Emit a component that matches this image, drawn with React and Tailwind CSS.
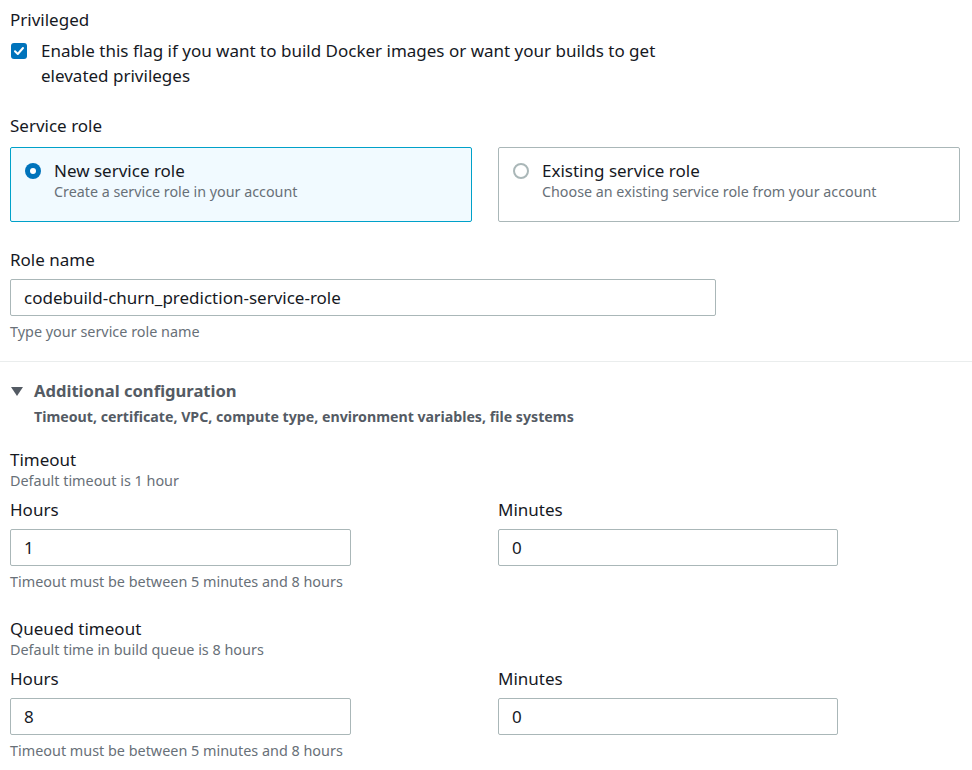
import React from "react";

const FONT = { fontFamily: '"Noto Sans", "Open Sans", sans-serif' };

function Label({ children, className = "" }) {
  return <div className={`text-[17px] leading-[24px] text-[#16191f] ${className}`}>{children}</div>;
}

function Desc({ children, className = "" }) {
  return <div className={`text-[14.4px] leading-[20px] text-[#687078] ${className}`}>{children}</div>;
}

function TextBox({ value, className = "" }) {
  return (
    <div
      className={`h-[37px] border border-[#aab7b8] rounded-[2px] bg-white pl-[13px] flex items-center text-[17px] text-[#16191f] ${className}`}
    >
      {value}
    </div>
  );
}

function Radio({ checked }) {
  return checked ? (
    <div className="w-[16px] h-[16px] rounded-full bg-[#0073bb] flex items-center justify-center shrink-0">
      <div className="w-[6px] h-[6px] rounded-full bg-white" />
    </div>
  ) : (
    <div className="w-[16px] h-[16px] rounded-full border-2 border-[#aab7b8] bg-white shrink-0" />
  );
}

function RoleCard({ checked, title, desc }) {
  return (
    <div
      className={`h-[75px] border rounded-[2px] pl-[14px] pt-[11px] flex gap-[13px] ${
        checked ? "bg-[#f1faff] border-[#00a1c9]" : "bg-white border-[#aab7b8]"
      }`}
    >
      <div className="pt-[4px]">
        <Radio checked={checked} />
      </div>
      <div>
        <div className="text-[17px] leading-[24px] text-[#16191f]">{title}</div>
        <div className="text-[14.3px] leading-[20px] text-[#687078] mt-[-1px]">{desc}</div>
      </div>
    </div>
  );
}

function TimeRow({ hours, minutes }) {
  return (
    <div className="grid grid-cols-2 gap-[26px] pr-[12px]">
      <div>
        <Label className="mt-[7px]">Hours</Label>
        <TextBox value={hours} className="mt-[7px] w-[341px]" />
        <Desc className="mt-[6px]">Timeout must be between 5 minutes and 8 hours</Desc>
      </div>
      <div>
        <Label className="mt-[7px]">Minutes</Label>
        <TextBox value={minutes} className="mt-[7px] w-[340px]" />
      </div>
    </div>
  );
}

export default function App() {
  return (
    <div className="w-[972px] h-[770px] bg-white overflow-hidden" style={FONT}>
      <div className="pl-[10px] pt-[8px]">
        <Label>Privileged</Label>
        <div className="flex mt-[7px]">
          <div className="pt-[4px] pl-[1px]">
            <div className="w-[16px] h-[16px] rounded-[3px] bg-[#0073bb] flex items-center justify-center">
              <svg width="12" height="12" viewBox="0 0 12 12" fill="none">
                <path d="M2 6.2 L4.8 9 L10 3" stroke="white" strokeWidth="2" strokeLinecap="round" strokeLinejoin="round" />
              </svg>
            </div>
          </div>
          <div className="ml-[14px] text-[17px] leading-[25px] text-[#16191f] w-[640px] mt-[-1px]">
            Enable this flag if you want to build Docker images or want your builds to get elevated privileges
          </div>
        </div>

        <Label className="mt-[26px]">Service role</Label>
        <div className="grid grid-cols-2 gap-[26px] pr-[12px] mt-[9px]">
          <RoleCard checked title="New service role" desc="Create a service role in your account" />
          <RoleCard title="Existing service role" desc="Choose an existing service role from your account" />
        </div>

        <Label className="mt-[26px]">Role name</Label>
        <TextBox value="codebuild-churn_prediction-service-role" className="mt-[7px] w-[706px]" />
        <Desc className="mt-[6px]">Type your service role name</Desc>
      </div>

      <div className="mt-[19px] h-px bg-[#eaeded]" />

      <div className="pl-[10px]">
        <div className="mt-[17px] flex items-center">
          <svg width="12" height="9" viewBox="0 0 12 9" className="ml-[1px]">
            <path d="M0 0 H12 L6 9 Z" fill="#545b64" />
          </svg>
          <div className="ml-[11px] text-[16.6px] leading-[24px] font-bold text-[#545b64]">Additional configuration</div>
        </div>
        <div className="ml-[24px] mt-[4px] text-[14.2px] leading-[20px] font-bold text-[#545b64]">
          Timeout, certificate, VPC, compute type, environment variables, file systems
        </div>

        <Label className="mt-[21px]">Timeout</Label>
        <Desc className="mt-[-1px]">Default timeout is 1 hour</Desc>
        <TimeRow hours="1" minutes="0" />

        <Label className="mt-[25px]">Queued timeout</Label>
        <Desc className="mt-[-1px]">Default time in build queue is 8 hours</Desc>
        <TimeRow hours="8" minutes="0" />
      </div>
    </div>
  );
}
